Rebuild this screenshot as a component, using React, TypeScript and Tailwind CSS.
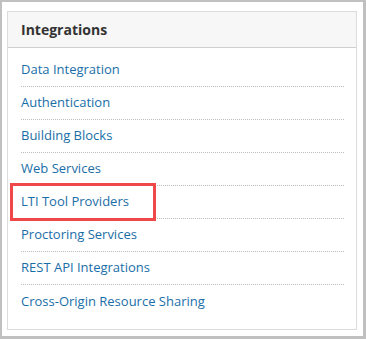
import React from "react";

const items = [
  "Data Integration",
  "Authentication",
  "Building Blocks",
  "Web Services",
  "LTI Tool Providers",
  "Proctoring Services",
  "REST API Integrations",
  "Cross-Origin Resource Sharing",
];

export default function App() {
  return (
    <div
      className="w-[366px] h-[339px] bg-white border-l-2 border-t-2 border-r-[3px] border-b-[3px] border-[#c0c0c0] pl-[5px] pt-[9px] pr-[6px] pb-[6px]"
      style={{ fontFamily: '"Open Sans", sans-serif' }}
    >
      <div className="w-[350px] h-[319px] border border-[#dcdcdc] bg-white">
        <div className="h-[36px] bg-[#f7f7f7] border-b border-[#cfcfcf] pl-[13px] flex items-center">
          <span className="text-[14px] font-bold text-[#333333]">Integrations</span>
        </div>
        <ul className="pt-[6px] pl-[13px] pr-[12px]">
          {items.map((t, i) => (
            <li
              key={t}
              className={`relative h-[33px] flex items-center ${
                i < items.length - 1 ? "border-b border-dotted border-[#bdbdbd]" : ""
              }`}
            >
              <span className="text-[13px] text-[#1a6ea8] leading-none pb-px">{t}</span>
              {t === "LTI Tool Providers" && (
                <div className="absolute left-[-11px] top-[-3px] w-[146px] h-[38px] border-[3px] border-[#f04848]" />
              )}
            </li>
          ))}
        </ul>
      </div>
    </div>
  );
}
